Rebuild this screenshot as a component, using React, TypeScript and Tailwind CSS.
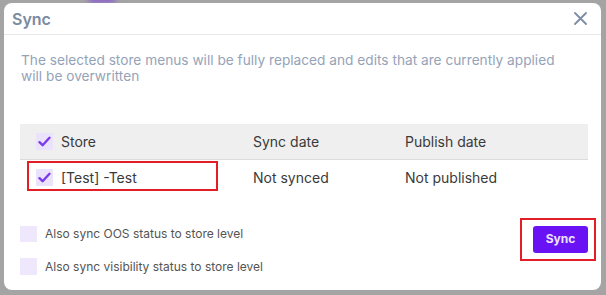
import React from "react";

function Check() {
  return (
    <div className="w-[17px] h-[17px] bg-[#ebe2fc] flex items-center justify-center shrink-0">
      <svg width="13" height="11" viewBox="0 0 13 11">
        <path d="M1.5 6.2 L4.6 9.2 L11.5 1.8" fill="none" stroke="#7c3aed" strokeWidth="2.4" strokeLinecap="round" strokeLinejoin="round" />
      </svg>
    </div>
  );
}

export default function App() {
  return (
    <div className="relative w-[606px] h-[295px] bg-[#a4a4a4] pt-[3px] pl-[4px] pr-[5px] pb-[5px] overflow-hidden" style={{ fontFamily: "Inter, 'Noto Sans', sans-serif" }}>
      <div className="absolute left-[88px] top-[-6px] w-[28px] h-[9px] rounded-full bg-[#8a5fd0] blur-[3px]" />
      <div className="relative h-full bg-white rounded-[8px] flex flex-col">
        <div className="h-[32px] border-b border-[#e6e8ec] flex items-center justify-between pl-[8px] pr-[14px]">
          <span className="text-[16px] font-semibold text-[#7b8aa3]">Sync</span>
          <svg width="13" height="13" viewBox="0 0 13 13">
            <path d="M1 1 L12 12 M12 1 L1 12" stroke="#7d8ca6" strokeWidth="1.8" strokeLinecap="round" />
          </svg>
        </div>
        <div className="px-[16px] pt-[17px]">
          <p className="max-w-[555px] text-[13.7px] leading-[16px] text-[#95a3b8] pl-[1px]">
            The selected store menus will be fully replaced and edits that are currently applied will be overwritten
          </p>
          <div className="mt-[40px] mr-[-3px] text-[14px] text-[#3a3a3a]">
            <div className="h-[36px] bg-[#efefef] border-b border-[#dcdcdc] flex items-center">
              <div className="w-[233px] flex items-center pl-[16px] gap-[8px]">
                <Check />
                <span>Store</span>
              </div>
              <div className="w-[152px]">Sync date</div>
              <div>Publish date</div>
            </div>
            <div className="relative h-[35px] flex items-center">
              <div className="w-[233px] flex items-center pl-[16px] gap-[8px]">
                <Check />
                <span>[Test] -Test</span>
              </div>
              <div className="w-[152px]">Not synced</div>
              <div>Not published</div>
              <div className="absolute left-[7px] top-[1px] w-[191px] h-[30px] border-2 border-[#e41e26]" />
            </div>
          </div>
          <div className="mt-[31px] flex items-start justify-between">
            <div className="flex flex-col gap-[16px] text-[12px] text-[#545454]">
              <div className="flex items-center gap-[8px] h-[16px]">
                <div className="w-[17px] h-[16px] bg-[#efe8fd]" />
                <span>Also sync OOS status to store level</span>
              </div>
              <div className="flex items-center gap-[8px] h-[17px]">
                <div className="w-[17px] h-[17px] bg-[#efe8fd]" />
                <span>Also sync visibility status to store level</span>
              </div>
            </div>
            <div className="relative mr-[-3px] mt-[-1px]">
              <button className="w-[55px] h-[27px] rounded-[3px] bg-[#6913f5] text-[#ece3ff] text-[12px] font-bold">Sync</button>
              <div className="absolute left-[-13px] top-[-7px] w-[76px] h-[43px] border-2 border-[#e41e26]" />
            </div>
          </div>
        </div>
      </div>
    </div>
  );
}
